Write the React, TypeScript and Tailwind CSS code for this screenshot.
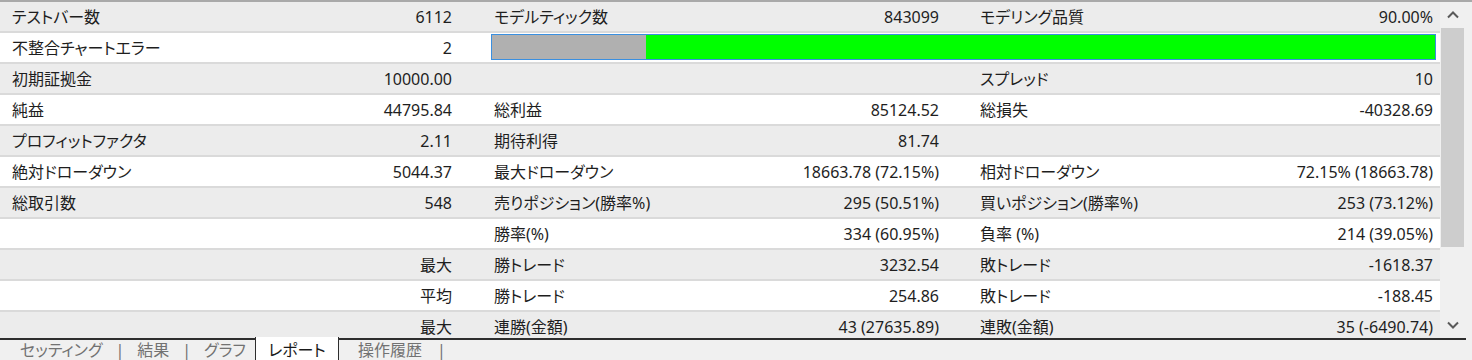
import React from "react";

type Row = [string, string, string, string, string, string];

const rows: Row[] = [
  ["テストバー数", "6112", "モデルティック数", "843099", "モデリング品質", "90.00%"],
  ["不整合チャートエラー", "2", "", "", "", ""],
  ["初期証拠金", "10000.00", "", "", "スプレッド", "10"],
  ["純益", "44795.84", "総利益", "85124.52", "総損失", "-40328.69"],
  ["プロフィットファクタ", "2.11", "期待利得", "81.74", "", ""],
  ["絶対ドローダウン", "5044.37", "最大ドローダウン", "18663.78 (72.15%)", "相対ドローダウン", "72.15% (18663.78)"],
  ["総取引数", "548", "売りポジション(勝率%)", "295 (50.51%)", "買いポジション(勝率%)", "253 (73.12%)"],
  ["", "", "勝率(%)", "334 (60.95%)", "負率 (%)", "214 (39.05%)"],
  ["", "最大", "勝トレード", "3232.54", "敗トレード", "-1618.37"],
  ["", "平均", "勝トレード", "254.86", "敗トレード", "-188.45"],
  ["", "最大", "連勝(金額)", "43 (27635.89)", "連敗(金額)", "35 (-6490.74)"],
];

const Cell = ({ label, value, className }: { label: string; value: string; className: string }) => (
  <div className={`flex items-center justify-between pl-[12px] pr-[6px] ${className}`}>
    <span>{label}</span>
    <span>{value}</span>
  </div>
);

const Chevron = ({ down }: { down?: boolean }) => (
  <svg width="12" height="8" viewBox="0 0 12 8" fill="none">
    <path
      d={down ? "M1 1.5 L6 6.5 L11 1.5" : "M1 6.5 L6 1.5 L11 6.5"}
      stroke="#5a5a5a"
      strokeWidth="2"
    />
  </svg>
);

export default function App() {
  return (
    <div
      className="w-[1472px] h-[360px] overflow-hidden bg-[#f0f0f0] text-[16px] text-[#1e1e1e] [font-feature-settings:'palt']"
      style={{ fontFamily: '"Noto Sans", "Noto Sans CJK JP", sans-serif' }}
    >
      <div className="flex h-[338px] border-t-2 border-[#a9a9a9]">
        <div className="w-[1440px] overflow-hidden bg-white">
          {rows.map((r, i) => (
            <div
              key={i}
              className={`flex h-[31px] border-b-2 border-[#dadada] leading-none ${i % 2 === 0 ? "bg-[#ececec]" : "bg-white"}`}
            >
              <Cell label={r[0]} value={r[1]} className="w-[458px]" />
              {i === 1 ? (
                <div className="ml-[33px] mt-[1px] flex h-[26px] w-[945px] border border-[#3a8fe0]">
                  <div className="w-[154px] bg-[#b0b0b0]"></div>
                  <div className="flex-1 bg-[#00ff00]"></div>
                </div>
              ) : (
                <>
                  <Cell label={r[2]} value={r[3]} className="ml-[24px] w-[463px]" />
                  <Cell label={r[4]} value={r[5]} className="ml-[23px] w-[471px]" />
                </>
              )}
            </div>
          ))}
        </div>
        <div className="flex w-[32px] flex-col bg-[#f0f0f0]">
          <div className="ml-[7px] mt-[9px]">
            <Chevron />
          </div>
          <div className="ml-[1px] mt-[9px] h-[219px] w-[23px] bg-[#cdcdcd]"></div>
          <div className="flex-1"></div>
          <div className="ml-[7px] mb-[9px]">
            <Chevron down />
          </div>
        </div>
      </div>
      <div className="flex h-[22px] w-[1466px] border-t-2 border-[#2e2e2e] leading-none text-[#727272]">
        <div className="flex w-[255px] gap-[13px] pl-[20px] pt-[2px]">
          <span>セッティング</span>
          <span>|</span>
          <span>結果</span>
          <span>|</span>
          <span>グラフ</span>
        </div>
        <div className="relative -mt-[3px] w-[84px] border-x border-[#2e2e2e] bg-white pt-[5px] text-center text-[#1a1a1a]">
          レポート
        </div>
        <div className="flex gap-[15px] pl-[19px] pt-[2px]">
          <span>操作履歴</span>
          <span>|</span>
        </div>
      </div>
    </div>
  );
}
